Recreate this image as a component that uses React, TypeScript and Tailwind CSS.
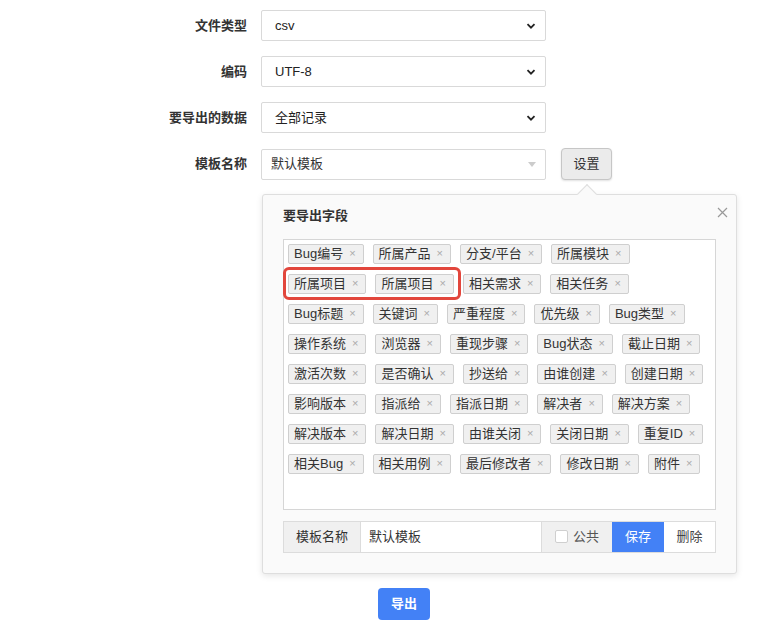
import { ReactNode } from "react";

const FONT = { fontFamily: '"Liberation Sans", "Noto Sans CJK SC", sans-serif' };

const fields = [
  "Bug编号", "所属产品", "分支/平台", "所属模块",
  "所属项目", "所属项目", "相关需求", "相关任务",
  "Bug标题", "关键词", "严重程度", "优先级", "Bug类型",
  "操作系统", "浏览器", "重现步骤", "Bug状态", "截止日期",
  "激活次数", "是否确认", "抄送给", "由谁创建", "创建日期",
  "影响版本", "指派给", "指派日期", "解决者", "解决方案",
  "解决版本", "解决日期", "由谁关闭", "关闭日期", "重复ID",
  "相关Bug", "相关用例", "最后修改者", "修改日期", "附件",
];

function Row({ label, children }: { label: string; children: ReactNode }) {
  return (
    <div className="flex items-center">
      <div className="w-[247px] text-right text-[13px] font-bold text-[#333]">{label}</div>
      <div className="ml-[14px] flex items-center">{children}</div>
    </div>
  );
}

function FakeSelect({ value }: { value: string }) {
  return (
    <div className="flex h-[31px] w-[285px] items-center justify-between rounded-[2px] border border-[#d9d9d9] bg-white pl-[13px] pr-[9px] text-[13px] text-[#222]">
      <span>{value}</span>
      <svg width="10" height="10" viewBox="0 0 10 10">
        <path d="M1.5 3.2 5 6.7 8.5 3.2" fill="none" stroke="#222" strokeWidth="1.8" />
      </svg>
    </div>
  );
}

function Tag({ name }: { name: string }) {
  return (
    <span className="flex h-[20px] items-center rounded-[2px] border border-[#cfcfcf] bg-[#f0f0f0] pl-[5px] pr-[7px] text-[13px] leading-none text-[#333]">
      {name}
      <span className="ml-[6px] text-[11px] text-[#aaa]">×</span>
    </span>
  );
}

export default function App() {
  return (
    <div className="relative min-h-[625px] bg-white" style={FONT}>
      <div className="flex flex-col gap-[15px] pt-[10px]">
        <Row label="文件类型">
          <FakeSelect value="csv" />
        </Row>
        <Row label="编码">
          <FakeSelect value="UTF-8" />
        </Row>
        <Row label="要导出的数据">
          <FakeSelect value="全部记录" />
        </Row>
        <Row label="模板名称">
          <div className="flex h-[31px] w-[285px] items-center justify-between rounded-[2px] border border-[#d9d9d9] bg-white pl-[9px] pr-[9px] text-[13px] text-[#333]">
            <span>默认模板</span>
            <svg width="8" height="5" viewBox="0 0 8 5">
              <path d="M0 0h8L4 5z" fill="#ccc" />
            </svg>
          </div>
          <button
            className="ml-[15px] h-[32px] w-[51px] rounded-[4px] border border-[#c6c6c6] bg-[#ebebeb] text-[13px] text-[#333] shadow-[0_1px_2px_rgba(0,0,0,0.12)]"
            type="button"
          >
            设置
          </button>
        </Row>
      </div>

      <div className="relative ml-[262px] mt-[14px] w-[475px] rounded-[3px] border border-[#dedede] bg-[#fafafa] px-[20px] pb-[20px] pt-[11px] shadow-[0_2px_6px_rgba(0,0,0,0.1)]">
        <div className="absolute -top-[8px] left-[317px] h-[14px] w-[14px] rotate-45 border-l border-t border-[#dedede] bg-[#fafafa]" />
        <div className="flex items-center justify-between">
          <h3 className="text-[13px] font-bold text-[#333]">要导出字段</h3>
          <svg className="-mr-[12px] -mt-[6px]" width="11" height="11" viewBox="0 0 11 11">
            <path d="M1 1l9 9M10 1l-9 9" stroke="#999" strokeWidth="1.2" />
          </svg>
        </div>
        <div className="mt-[13px] h-[271px] border border-[#d6d6d6] bg-white px-[4px] py-[4px]">
          <div className="flex flex-wrap gap-x-[9px] gap-y-[10px]">
            {fields.map((name, i) => (
              <Tag key={i} name={name} />
            ))}
          </div>
        </div>
        <div className="mt-[11px] flex h-[32px] border border-[#dcdcdc] text-[13px] text-[#333]">
          <div className="flex w-[77px] items-center justify-center border-r border-[#dcdcdc] bg-[#f0f0f0]">
            模板名称
          </div>
          <div className="flex flex-1 items-center bg-white pl-[8px]">默认模板</div>
          <div className="flex w-[71px] items-center border-l border-[#dcdcdc] bg-[#f0f0f0] pl-[13px]">
            <span className="h-[13px] w-[13px] rounded-[2px] border border-[#cfcfcf] bg-white" />
            <span className="ml-[5px] text-[#555]">公共</span>
          </div>
          <button className="w-[52px] bg-[#4381f6] text-white" type="button">
            保存
          </button>
          <button className="w-[51px] bg-white text-[#444]" type="button">
            删除
          </button>
        </div>
      </div>

      <button
        className="ml-[378px] mt-[14px] block h-[32px] w-[52px] rounded-[4px] bg-[#4381f6] text-[13px] font-bold text-white"
        type="button"
      >
        导出
      </button>

      <div className="pointer-events-none absolute left-[283px] top-[267px] h-[33px] w-[178px] rounded-[6px] border-[3px] border-[#e2463c]" />
    </div>
  );
}
